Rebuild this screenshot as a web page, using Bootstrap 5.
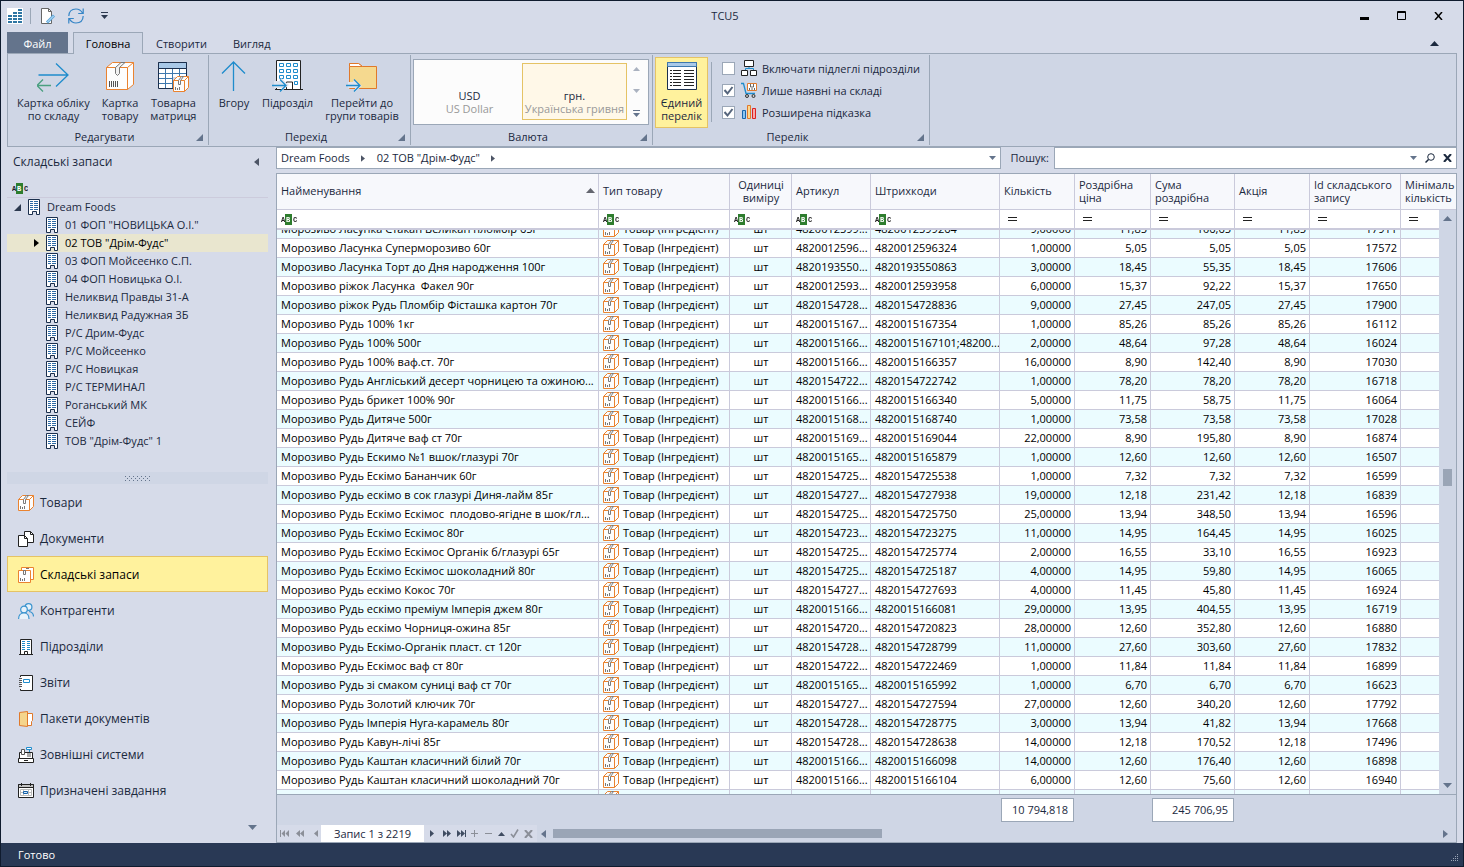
<!DOCTYPE html>
<html lang="uk">
<head>
<meta charset="utf-8">
<meta name="viewport" content="width=device-width, initial-scale=1">
<title>TCU5</title>
<link href="https://cdn.jsdelivr.net/npm/bootstrap@5.3.0/dist/css/bootstrap.min.css" rel="stylesheet">
<style>
:root{--bg:#d6dbe9;--panel:#cfd6e5;--line:#9ba7b7;--grid:#cacadb;--ink:#1b293e;--hot:#fff29d;--hotline:#e5c365;--accent:#64748c}
body{font-family:"Open Sans","Noto Sans",sans-serif;font-size:11px;line-height:13px;color:var(--ink);background:var(--bg)}
button{background:none;border:0;padding:0;color:inherit;font:inherit}
a{color:inherit;text-decoration:none}
svg{display:block;flex:none}
.app{border:1px solid #0f1b2e;background:var(--bg)}
.titlebar{display:grid;grid-template-columns:1fr auto 1fr;height:31px;padding:0 20px 2px 6px}
.vsep{width:1px;height:16px;background:var(--line);margin:0 9px 0 7px}
.winbtns{gap:28px}
.tabs{height:21px;padding-left:6px}
.tabs button{padding:0 13px;height:22px}
.tabs .tab-file{width:61px;background:var(--accent);color:#fff;margin-right:5px;padding:0}
.tabs .tab-on{width:70px;padding:0;border:1px solid var(--line);border-bottom:0;background:var(--panel);color:#000;position:relative;z-index:1}
.ribbon{margin:0 6px;border:1px solid var(--line);background:var(--panel);height:94px}
.rgroup{border-right:1px solid var(--line);margin:1px 0;padding-top:2px}
.g-edit{width:201px}.g-go{width:202px}.g-cur{width:242px}.g-list{width:277px}
.rgroup .tools{height:72px;padding-left:3px}
.rtitle{height:16px;text-align:center;position:relative;line-height:16px;padding-right:7px}
.rtitle::after{content:"";position:absolute;right:5px;bottom:4px;border-left:7px solid transparent;border-bottom:7px solid var(--accent)}
.big{padding:3px 6px 0;text-align:center;display:flex;flex-direction:column;align-items:center;white-space:nowrap}
.big svg{margin-bottom:4px}
.big.on{background:var(--hot);border:1px solid var(--hotline);width:53px;height:71px;padding:2px 0 0;margin-left:-1px}
.gallery{background:#fcfcfc;border:1px solid var(--line);width:236px;height:66px;margin-top:2px;margin-left:-1px;padding:3px}
.gallery .cur{width:105px;display:flex;flex-direction:column;justify-content:flex-end;align-items:center;border:1px solid transparent;height:57px;padding-bottom:4px}
.gallery .cur small{font-size:11px;color:#999;white-space:nowrap}
.gallery .cur.on{border-color:var(--hotline);background:#fff8e8}
.toolsep{width:1px;height:60px;background:var(--line);margin:5px 10px 0 3px}
.checks label{height:22px;gap:5px;white-space:nowrap}
.checks .form-check-input{width:13px;height:13px;margin:0 1px 0 0;border:1px solid var(--line);border-radius:0;background-color:#fff;background-size:11px 11px}
.checks .form-check-input:checked{background-color:#fff;background-image:url("data:image/svg+xml,%3csvg xmlns='http://www.w3.org/2000/svg' viewBox='0 0 11 11'%3e%3cpath fill='none' stroke='%2356657c' stroke-width='2' d='M1.500 5l3 3.500L9.500 2'/%3e%3c/svg%3e")}
.lift{padding-bottom:2px}
.side{width:275px;padding-left:6px}
.side-title{height:30px;font-size:12px;line-height:16px;padding:0 9px 0 6px}
.tree-filter{height:21px;border-bottom:1px solid #cccbdc;padding:2px 0 0 5px}
.tree a{height:18px;padding-left:39px;gap:7px}
.tree a.root{padding-left:7px}
.tree a.on{background:#e9e6cf;color:#000;padding-left:27px}
.grip{height:12px;background:var(--panel)}
.sidenav a{height:36px;padding:2px 0 0 10px;gap:6px;font-size:12px;line-height:16px;border:1px solid transparent}
.sidenav a.on{background:var(--hot);border-color:var(--hotline);color:#000}
.sidemore{height:35px;padding:17px 11px 0 0}
.sidecol{width:261px}
.content{padding-right:6px}
.field{border:1px solid var(--line);background:#fff;height:22px}
.crumbs{flex:0 0 725px;padding:0 4px}
.crumbs a{padding-right:11px}
.searchlbl{width:53px;text-align:right;padding-right:5px}
.searchbox input{border:0;outline:0;height:18px;font:inherit;min-width:0;background:none;padding:0 4px}
.gridbox{border:1px solid var(--line);margin-top:4px;background:var(--panel)}
.viewport{overflow:hidden;position:relative;border-bottom:1px solid var(--line)}
.scroller{overflow:hidden;height:100%}
.stock,.sums{table-layout:fixed;border-collapse:separate;border-spacing:0;width:100%}
.stock thead{position:sticky;top:0}
.stock th,.stock td{padding:0 3px 2px 4px;border-right:1px solid var(--grid);border-bottom:1px solid var(--grid);white-space:nowrap;overflow:hidden;font-weight:400}
.stock th{height:36px;background:#f7f8fc;vertical-align:middle}
.stock .filters td{height:20px;background:#fff;border-bottom-width:2px;padding-bottom:0}
.stock .filters td.eq{padding-left:8px}
.stock tbody td{height:19px;background:#fff;color:#000}
.stock tbody td.kindcell{padding-bottom:0}
.stock tbody tr:nth-child(odd) td{background:#ebfcff}
.stock .num{text-align:right}
.stock tr>:last-child{border-right:0;padding-right:0}
.stock .art{padding-right:0}
.kind{gap:4px}
.c1{width:322px}.c2{width:131px}.c3{width:62px}.c4{width:79px}.c5{width:129px}.c6{width:75px}.c7{width:76px}.c8{width:84px}.c9{width:75px}.c10{width:91px}
.vscroll{position:absolute;top:36px;right:0;bottom:0;width:17px;background:var(--panel);display:grid;grid-template-rows:17px 1fr 17px;justify-items:center;align-items:center}
.vthumb{width:9px;height:17px;background:#9aa5b6;align-self:start;margin-top:242px}
.sums td{height:30px;padding:0 1px}
.sumbox{display:block;height:24px;line-height:22px;border:1px solid var(--line);background:#fff;text-align:right;padding-right:5px}
.pager{height:17px}
.pager .keys{background:var(--bg);height:17px;width:44px;gap:6px;padding-left:3px}
.pager .keys.right{width:113px;gap:5px;padding-left:6px}
.pager .rec{width:103px;background:#fff;height:17px;line-height:17px;text-align:center}
.track{height:9px;margin:0 0 0 7px}
.hthumb{height:9px;width:37%;background:#9aa5b6}
.status{height:23px;background:#293955;color:#fff;padding:0 4px 0 17px}
</style>
</head>
<body>
<svg width="0" height="0" class="position-absolute" aria-hidden="true">
<defs>
<symbol id="i-abc" viewBox="0 0 16 11"><path fill="#2e7d2e" d="M4 0h7v11H4z"/><g font-family="Liberation Mono" font-weight="700" font-size="7"><text x="0" y="8" fill="#222">A</text><text x="5" y="8" fill="#fff">B</text><text x="12" y="8" fill="#222">C</text></g></symbol>
<symbol id="i-eq" viewBox="0 0 9 5"><path stroke="#222" d="M0 .5h9M0 3.500h9"/></symbol>
<symbol id="i-box" viewBox="0 0 16 16"><g fill="none" stroke="#ea8330"><path fill="#fdfdfd" d="M.5 4.500 4.500.5h11v11l-4 4H.5z"/><path d="M.5 4.500h11v11M11.500 4.500l4-4"/></g><path fill="#fff" stroke="#7a7a7a" d="M5.500 4.500 8.500.5h2l-3 4v4h-2z"/><path stroke="#777" d="M2.500 11v3M4.500 12v2M6.500 11v3"/></symbol>
<symbol id="i-stock" viewBox="0 0 16 16"><g fill="#fff" stroke="#ea8330"><path d="M3.500 3V.5h12v12h-3"/><path d="M.5 3.500h12v12H.5z"/></g><path fill="none" stroke="#777" d="M5.500 3.500v4h2v-4zM8 1.500h3M2.500 11v3M4.500 12v2M6.500 11v3"/></symbol>
<symbol id="i-house" viewBox="0 0 12 16"><path fill="#fff" stroke="#1b2f4d" d="M.5.5h11v15h-3v-3h-4v3h-4z"/><path stroke="#2d6aa5" d="M2 2.500h3M6 2.500h4M2 4.500h3M6 4.500h4M2 6.500h3M6 6.500h4M2 8.500h3M6 8.500h4M2 10.500h3M6 10.500h4"/></symbol>
<symbol id="i-docs" viewBox="0 0 16 16"><g fill="#fff" stroke="#222"><path d="M6.500.5h6l3 3v8h-9z"/><path fill="none" d="M12.500.5v3h3"/><path d="M.5 4.500h6l3 3v8h-9z"/><path fill="none" d="M6.500 4.500v3h3"/></g></symbol>
<symbol id="i-people" viewBox="0 0 16 16"><g fill="#e8f2fa" stroke="#3a94cf" stroke-width="1.200"><circle cx="10.500" cy="4" r="3.400"/><path fill="none" d="M11 8.500c3 .5 4.500 2.500 4.500 5"/><circle cx="6" cy="6.500" r="3.300"/><path d="M.6 16c0-4 2-6 5.400-6s5 2 5 6"/></g></symbol>
<symbol id="i-dept" viewBox="0 0 16 16"><path fill="#fff" stroke="#222" d="M2.500 15.500V.5h11v15M1 15.500h14M6.500 15.500v-3h3v3"/><path stroke="#1f8ccc" d="M4 2.500h3M9 2.500h3M4 4.500h3M9 4.500h3M4 6.500h3M9 6.500h3M4 8.500h3M9 8.500h3M4 10.500h3M9 10.500h3"/></symbol>
<symbol id="i-report" viewBox="0 0 16 16"><path fill="#fff" stroke="#222" d="M2.500 2V.5h12v15h-12V14"/><path stroke="#555" d="M1 3.500h3M1 5.500h3M1 7.500h3M1 9.500h3M1 11.500h3"/><path fill="#fff" stroke="#1f8ccc" d="M5.500 4.500h6v3h-6z"/></symbol>
<symbol id="i-pack" viewBox="0 0 16 16"><path fill="#fff" stroke="#e0792b" d="M9.500 2.500h5v7l-1 1v4h-4z"/><path fill="#f5d58c" stroke="#e0792b" d="m1.500 1.500 8-1v15l-8-1z"/></symbol>
<symbol id="i-cash" viewBox="0 0 16 16"><path fill="#fff" stroke="#222" d="M1.500 11V5.500h13V11M.5 11.500h15v4H.5z"/><path stroke="#222" d="M6 13.500h4"/><path fill="#fff" stroke="#555" d="M3.500 2.500h3v5h-3z"/><path fill="#aaa" d="M9 6h4v4H9z"/><path fill="#fff" stroke="#1f8ccc" d="M8.500.5h5v2h-5zM11.500 3v2"/></symbol>
<symbol id="i-cal" viewBox="0 0 16 16"><path fill="#fff" stroke="#222" d="M.5 1.500h15v13H.5z"/><path fill="#c4c4c4" stroke="#222" d="M.5 1.500h15v3H.5z"/><path stroke="#222" d="M3.500 0v3M12.500 0v3"/><path fill="none" stroke="#bbb" d="M2.500 6.500h11v6h-11zM2 9.500h12M5.500 6v7M10.500 6v7"/><path fill="#cfe6f8" stroke="#1560a8" d="M5.500 8.500h4v2h-4z"/></symbol>
<symbol id="t-r" viewBox="0 0 5 8"><path d="M0 0 5 4 0 8z" fill="currentColor"/></symbol>
<symbol id="t-l" viewBox="0 0 5 8"><path d="M5 0 0 4 5 8z" fill="currentColor"/></symbol>
<symbol id="t-u" viewBox="0 0 9 5"><path d="M0 5 4.500 0 9 5z" fill="currentColor"/></symbol>
<symbol id="t-d" viewBox="0 0 9 5"><path d="M0 0h9L4.500 5z" fill="currentColor"/></symbol>
<pattern id="dots" width="4" height="4" patternUnits="userSpaceOnUse"><path fill="#64748c" d="M0 0h1v1H0zM2 2h1v1H2z"/></pattern>
</defs>
</svg>

<div class="app vh-100 d-flex flex-column overflow-hidden">
<header class="titlebar align-items-center flex-shrink-0">
  <div class="d-flex align-items-center">
    <svg width="16" height="16"><path fill="#fff" d="M0 0h16v16H0z"/><path fill="#2e75a3" d="M1 7h4v2H1zM1 10h4v2H1zM1 13h4v2H1zM6 4h4v2H6zM6 7h4v2H6zM6 10h4v2H6zM6 13h4v2H6zM11 1h4v2h-4zM11 4h4v2h-4zM11 7h4v2h-4zM11 10h4v2h-4zM11 13h4v2h-4z"/></svg>
    <span class="vsep"></span>
    <button aria-label="Новий документ"><svg width="16" height="16"><path fill="#fff" stroke="#666" d="M1.500.5h7l3 3v12h-10z"/><path fill="none" stroke="#666" d="M8.500.5v3h3"/><path stroke="#5fa8dc" stroke-width="3" d="m7 14.500 7-7"/><path stroke="#d4ecfa" d="m7.500 14 6-6"/></svg></button>
    <button aria-label="Оновити" class="ms-2 ps-1"><svg width="16" height="16" fill="none" stroke="#3585c6" stroke-width="1.200"><path d="M.8 8C1 3.500 4 1 8 1c3 0 5 1.400 6.500 4M15.200 8C15 12.500 12 15 8 15c-3 0-5-1.400-6.500-4M15.200.5v5h-5M.8 15.500v-5h5"/></svg></button>
    <button aria-label="Налаштувати панель" class="ms-3"><svg width="9" height="7"><path fill="#2c394f" d="M1 0h7v1H1zM1 3h7L4.500 7z"/></svg></button>
  </div>
  <div>TCU5</div>
  <div class="winbtns d-flex align-items-center justify-content-end text-black">
    <button aria-label="Згорнути"><svg width="9" height="9"><path d="M0 6h9v3H0z"/></svg></button>
    <button aria-label="Розгорнути"><svg width="9" height="9"><path fill="none" stroke="#000" d="M.5.5h8v8h-8zM0 1.500h9"/></svg></button>
    <button aria-label="Закрити"><svg width="9" height="8"><path stroke="#000" stroke-width="1.500" d="m1 0 7 8M8 0 1 8"/></svg></button>
  </div>
</header>
<nav class="tabs d-flex flex-shrink-0">
  <button class="tab-file">Файл</button>
  <button class="tab-on">Головна</button>
  <button>Створити</button>
  <button>Вигляд</button>
  <button class="ms-auto me-2 pe-3" aria-label="Згорнути стрічку"><svg width="9" height="5"><use href="#t-u"/></svg></button>
</nav>
<section class="ribbon d-flex flex-shrink-0">
  <div class="rgroup g-edit">
    <div class="tools d-flex align-items-start">
      <button class="big"><svg width="32" height="32" fill="none" stroke-width="1.300"><path stroke="#1f8ccc" d="M1.500 15h29M19 3.500 31 15 19 26.500"/><path stroke="#4ba080" d="M0 25.500h14M6 19.500l-6 6 6 6"/></svg>Картка обліку<br>по складу</button>
      <button class="big"><svg width="32" height="32"><g fill="#fdfdfd" stroke="#ea8330"><path d="m2.500 7.500 6-5h21v22l-6 5h-21z"/><path fill="none" d="M2.500 7.500h21v22M23.500 7.500l6-5"/></g><path fill="#f2f2f2" stroke="#777" d="M11.500 7.500 17 2.500h4l-5.500 5v6l-2 2-2-2z"/><path stroke="#555" d="M5.500 21v6M7.500 21v6M9.500 21v6M11.500 21v6M13.500 21v6"/></svg>Картка<br>товару</button>
      <button class="big"><svg width="32" height="32"><path fill="#fff" stroke="#1b2f4d" d="M1.500 2.500h28v26h-28z"/><path fill="#a9c9e8" stroke="#1b2f4d" d="M1.500 2.500h28v6h-28z"/><path stroke="#3e78ad" d="M2 13.500h27M2 18.500h27M2 23.500h27M8.500 9v19M15.500 9v19M22.500 9v19"/><path fill="#cfd6e5" d="M16 17h16v15H16z"/><use href="#i-box" x="16" y="16" width="16" height="16"/></svg>Товарна<br>матриця</button>
    </div>
    <div class="rtitle">Редагувати</div>
  </div>
  <div class="rgroup g-go">
    <div class="tools d-flex align-items-start">
      <button class="big"><svg width="32" height="32" fill="none" stroke="#1f8ccc" stroke-width="1.300"><path d="M15.500 31V2M4 13.500 15.500 2 27 13.500"/></svg>Вгору</button>
      <button class="big"><svg width="32" height="32"><path fill="#fff" stroke="#222" d="M4.500 29.500V.5h24v29M3 29.500h28M14.500 29v-7h6v7"/><path fill="#fff" stroke="#1f8ccc" d="M7.500 3.500h4v3h-4zM14.500 3.500h4v3h-4zM21.500 3.500h4v3h-4zM7.500 9.500h4v3h-4zM14.500 9.500h4v3h-4zM21.500 9.500h4v3h-4zM7.500 15.500h4v3h-4zM14.500 15.500h4v3h-4zM21.500 15.500h4v3h-4zM22.500 21.500h3v3h-3z"/><path fill="#dfe4ee" d="M2 21h6l1-3 8 7-7 6v-3H2z"/><path fill="none" stroke="#1f8ccc" stroke-width="1.300" d="M0 25.500h14M8 19.500l6 6-6 6"/></svg>Підрозділ</button>
      <button class="big"><svg width="32" height="32"><path fill="#f5d98f" stroke="#e0792b" d="M3.500 5.500V3.500h9l4 3h14v22h-27z"/><path fill="#fff" stroke="#e0792b" d="M3.500 6.500v-3h9l4 3z"/><path fill="#dfe4ee" d="M2 22h5l1-3 8 7-7 6v-4H2z"/><path fill="none" stroke="#1f8ccc" stroke-width="1.300" d="M0 25.500h14M8 19.500l6 6-6 6"/></svg>Перейти до<br>групи товарів</button>
    </div>
    <div class="rtitle">Перехід</div>
  </div>
  <div class="rgroup g-cur">
    <div class="tools d-flex">
      <div class="gallery d-flex flex-shrink-0">
        <button class="cur">USD<small>US Dollar</small></button>
        <button class="cur on">грн.<small>Українська гривня</small></button>
        <div class="d-flex flex-column justify-content-between align-items-center flex-fill py-1">
          <svg width="7" height="4" color="#aab2c0"><use href="#t-u"/></svg>
          <svg width="7" height="4" color="#aab2c0"><use href="#t-d"/></svg>
          <svg width="7" height="7"><path fill="#64748c" d="M0 0h7v1H0zM0 3h7L3.500 7z"/></svg>
        </div>
      </div>
    </div>
    <div class="rtitle">Валюта</div>
  </div>
  <div class="rgroup g-list">
    <div class="tools d-flex">
      <button class="big on"><svg width="32" height="32"><path fill="#fff" stroke="#1b2f4d" d="M1.500 2.500h29v27h-29z"/><path fill="#a9c9e8" stroke="#3e78ad" d="M1.500 2.500h29v4h-29z"/><path stroke="#222" stroke-dasharray="2 1 8 1" d="M4 10.500h11M4 13.500h11M4 16.500h11M4 19.500h11M4 22.500h11M4 25.500h11"/><path stroke="#222" d="M18 10.500h10M18 13.500h10M18 16.500h10M18 19.500h10M18 22.500h10M18 25.500h10"/></svg>Єдиний<br>перелік</button>
      <span class="toolsep"></span>
      <div class="checks">
        <label class="d-flex align-items-center"><input type="checkbox" class="form-check-input"><svg width="16" height="16"><path fill="none" stroke="#1f8ccc" d="M8 6v3M4.500 10V8.500h8V10"/><path fill="#fff" stroke="#222" d="M3.500.5h9v6h-9zM.5 10.500h6v5h-6zM9.500 10.500h6v5h-6z"/></svg>Включати підлеглі підрозділи</label>
        <label class="d-flex align-items-center"><input type="checkbox" class="form-check-input" checked><svg width="16" height="16"><path fill="none" stroke="#1f8ccc" stroke-width="1.300" d="M0 1.500h2.500L5 11.500h9"/><path fill="#fff" stroke="#e0792b" d="M6.500 1.500h9v7h-9z"/><path fill="none" stroke="#666" d="M9.500 2v3h3V2M8.500 6v2M11 6v2M13.500 6v2"/><circle cx="6" cy="14" r="1.500" fill="#ccc" stroke="#333"/><circle cx="12.500" cy="14" r="1.500" fill="#ccc" stroke="#333"/></svg>Лише наявні на складі</label>
        <label class="d-flex align-items-center"><input type="checkbox" class="form-check-input" checked><svg width="16" height="16"><path fill="#8cc4ee" stroke="#1765ad" d="M1.500 6.500h3v8h-3z"/><path fill="#fbd78d" stroke="#e0792b" d="M6.500 1.500h3v13h-3z"/><path fill="#f6a9a9" stroke="#d22" d="M11.500 4.500h3v10h-3z"/></svg>Розширена підказка</label>
      </div>
    </div>
    <div class="rtitle">Перелік</div>
  </div>
</section>

<main class="d-flex flex-fill overflow-hidden">
  <aside class="side d-flex flex-column flex-shrink-0">
    <div class="side-title sidecol d-flex align-items-center justify-content-between">Складські запаси<button aria-label="Згорнути панель"><svg width="5" height="8" color="#4d5566"><use href="#t-l"/></svg></button></div>
    <div class="tree-filter sidecol"><svg width="16" height="11" class="mt-1"><use href="#i-abc"/></svg></div>
    <nav class="tree sidecol d-flex flex-column" id="tree">
      <a href="#" class="root d-flex align-items-center"><svg width="7" height="7"><path fill="#2c394f" d="M7 0v7H0z"/></svg><svg width="12" height="16"><use href="#i-house"/></svg><span class="lift">Dream Foods</span></a>
    </nav>
    <div class="grip sidecol mt-auto d-flex align-items-center justify-content-center"><svg width="26" height="5"><path d="M0 0h26v5H0z" fill="url(#dots)"/></svg></div>
    <nav class="sidenav sidecol d-flex flex-column" id="sidenav"></nav>
    <div class="sidemore sidecol d-flex justify-content-end align-items-start"><button aria-label="Ще розділи"><svg width="9" height="5" color="#64748c"><use href="#t-d"/></svg></button></div>
  </aside>
  <section class="content d-flex flex-column flex-fill overflow-hidden">
    <div class="d-flex align-items-center flex-shrink-0">
      <div class="field crumbs d-flex align-items-center">
        <a href="#" class="lift">Dream Foods</a><svg width="4" height="7" class="me-2" color="#4d5566"><use href="#t-r"/></svg>
        <a href="#" class="ps-1 lift">02 ТОВ "Дрім-Фудс"</a><svg width="4" height="7" color="#4d5566"><use href="#t-r"/></svg>
        <button class="ms-auto" aria-label="Історія"><svg width="7" height="4" color="#64748c"><use href="#t-d"/></svg></button>
      </div>
      <label class="searchlbl lift" for="q">Пошук:</label>
      <div class="field searchbox d-flex align-items-center flex-fill pe-1">
        <input id="q" type="text" class="flex-fill">
        <button aria-label="Варіанти пошуку"><svg width="7" height="4" color="#64748c"><use href="#t-d"/></svg></button>
        <button class="ms-2" aria-label="Шукати"><svg width="10" height="10" fill="none" stroke="#1b293e"><circle cx="6" cy="4" r="3.300"/><path stroke-width="1.500" d="M3.500 6.500.5 9.500"/></svg></button>
        <button class="ms-2" aria-label="Очистити"><svg width="9" height="8"><path stroke="#1b293e" stroke-width="2" d="m1 0 7 8M8 0 1 8"/></svg></button>
      </div>
    </div>
    <div class="gridbox d-flex flex-column flex-fill overflow-hidden">
      <div class="viewport flex-fill">
        <div class="scroller" id="scroller">
        <table class="stock">
          <colgroup><col class="c1"><col class="c2"><col class="c3"><col class="c4"><col class="c5"><col class="c6"><col class="c7"><col class="c8"><col class="c9"><col class="c10"><col></colgroup>
          <thead>
            <tr><th><div class="d-flex align-items-center justify-content-between">Найменування<svg width="9" height="5" color="#64666f"><use href="#t-u"/></svg></div></th><th>Тип товару</th><th class="text-center">Одиниці<br>виміру</th><th>Артикул</th><th>Штрихкоди</th><th>Кількість</th><th>Роздрібна<br>ціна</th><th>Сума<br>роздрібна</th><th>Акція</th><th>Id складського<br>запису</th><th>Мінімаль<br>кількість</th></tr>
            <tr class="filters" id="filters"></tr>
          </thead>
          <tbody id="rows"></tbody>
        </table>
        </div>
        <div class="vscroll" aria-hidden="true"><svg width="9" height="5" color="#64748c"><use href="#t-u"/></svg><span class="vthumb"></span><svg width="9" height="5" color="#64748c"><use href="#t-d"/></svg></div>
      </div>
      <table class="sums">
        <colgroup><col class="c1"><col class="c2"><col class="c3"><col class="c4"><col class="c5"><col class="c6"><col class="c7"><col class="c8"><col class="c9"><col class="c10"><col></colgroup>
        <tbody><tr><td></td><td></td><td></td><td></td><td></td><td><span class="sumbox">10 794,818</span></td><td></td><td><span class="sumbox">245 706,95</span></td><td></td><td></td><td></td></tr></tbody>
      </table>
      <div class="pager d-flex align-items-center">
        <div class="keys d-flex align-items-center">
          <button aria-label="Перший"><svg width="10" height="7" fill="#8b8f98"><path d="M0 0h1v7H0zM5 0v7L1.500 3.500zM9 0v7L5.500 3.500z"/></svg></button>
          <button aria-label="Попередня сторінка"><svg width="8" height="7" fill="#8b8f98"><path d="M4 0v7L0 3.500zM8 0v7L4 3.500z"/></svg></button>
          <button aria-label="Попередній"><svg width="4" height="7" class="ms-1" fill="#8b8f98"><path d="M4 0v7L0 3.500z"/></svg></button>
        </div>
        <span class="rec">Запис 1 з 2219</span>
        <div class="keys right d-flex align-items-center">
          <button aria-label="Наступний"><svg width="8" height="7" fill="#3f4c61"><path d="M0 0v7l4-3.500z"/></svg></button>
          <button aria-label="Наступна сторінка"><svg width="9" height="7" fill="#3f4c61"><path d="M0 0v7l4-3.500zM4 0v7l4-3.500z"/></svg></button>
          <button aria-label="Останній"><svg width="9" height="7" fill="#3f4c61"><path d="M0 0v7l4-3.500zM4 0v7l4-3.500zM8 0h1v7H8z"/></svg></button>
          <button aria-label="Додати"><svg width="8" height="8"><path stroke="#8b8f98" d="M0 3.500h7M3.500 0v7"/></svg></button>
          <button aria-label="Видалити"><svg width="9" height="8"><path stroke="#8b8f98" d="M1 3.500h7"/></svg></button>
          <button aria-label="Змінити"><svg width="7" height="4" color="#3f4c61"><use href="#t-u"/></svg></button>
          <button aria-label="Зберегти"><svg width="9" height="9"><path fill="none" stroke="#8b8f98" stroke-width="1.600" d="m1 5 2.500 3L8 .5"/></svg></button>
          <button aria-label="Скасувати"><svg width="9" height="8"><path stroke="#8b8f98" stroke-width="2" d="m1 0 7 8M8 0 1 8"/></svg></button>
        </div>
        <svg width="5" height="8" class="ms-1" color="#64748c"><use href="#t-l"/></svg>
        <div class="track flex-fill"><div class="hthumb"></div></div>
        <svg width="5" height="8" class="me-2" color="#64748c"><use href="#t-r"/></svg>
      </div>
    </div>
  </section>
</main>
<footer class="status d-flex align-items-center justify-content-between flex-shrink-0">Готово<svg width="8" height="8" class="align-self-end mb-1" fill="#9aa5b6"><path d="M6 0h1v1H6zM4 2h1v1H4zM6 2h1v1H6zM2 4h1v1H2zM4 4h1v1H4zM6 4h1v1H6zM0 6h1v1H0zM2 6h1v1H2zM4 6h1v1H4zM6 6h1v1H6z"/></svg></footer>
</div>

<script src="https://cdn.jsdelivr.net/npm/bootstrap@5.3.0/dist/js/bootstrap.bundle.min.js"></script>
<script>
const icon = (id, w, h) => `<svg width="${w}" height="${h}"><use href="#${id}"/></svg>`;

const units = ['01 ФОП "НОВИЦЬКА О.І."','02 ТОВ "Дрім-Фудс"','03 ФОП Мойсеєнко С.П.','04 ФОП Новицька О.І.','Неликвид Правды 31-А','Неликвид Радужная 3Б','Р/С Дрим-Фудс','Р/С Мойсеенко','Р/С Новицкая','Р/С ТЕРМИНАЛ','Роганський МК','СЕЙФ','ТОВ "Дрім-Фудс" 1'];
document.getElementById('tree').insertAdjacentHTML('beforeend', units.map((u, i) =>
  `<a href="#" class="d-flex align-items-center${i === 1 ? ' on' : ''}">${i === 1 ? icon('t-r', 5, 8) : ''}${icon('i-house', 12, 16)}<span class="lift">${u}</span></a>`).join(''));

const sections = [['i-box','Товари'],['i-docs','Документи'],['i-stock','Складські запаси'],['i-people','Контрагенти'],['i-dept','Підрозділи'],['i-report','Звіти'],['i-pack','Пакети документів'],['i-cash','Зовнішні системи'],['i-cal','Призначені завдання']];
document.getElementById('sidenav').innerHTML = sections.map(([ic, t], i) =>
  `<a href="#" class="d-flex align-items-center${i === 2 ? ' on' : ''}">${icon(ic, 16, 16)}${t}</a>`).join('');

document.getElementById('filters').innerHTML =
  `<td>${icon('i-abc', 16, 11)}</td>`.repeat(5) + `<td class="eq">${icon('i-eq', 9, 5)}</td>`.repeat(6);

/* name | article | barcodes | quantity | price | sum | record id */
const data = `Морозиво Ласунка Стакан Великан пломбір 65г|4820012599...|4820012599264|9,00000|11,85|106,65|17911
Морозиво Ласунка Суперморозиво 60г|4820012596...|4820012596324|1,00000|5,05|5,05|17572
Морозиво Ласунка Торт до Дня народження 100г|4820193550...|4820193550863|3,00000|18,45|55,35|17606
Морозиво ріжок Ласунка&nbsp; Факел 90г|4820012593...|4820012593958|6,00000|15,37|92,22|17650
Морозиво ріжок Рудь Пломбір Фісташка картон 70г|4820154728...|4820154728836|9,00000|27,45|247,05|17900
Морозиво Рудь 100% 1кг|4820015167...|4820015167354|1,00000|85,26|85,26|16112
Морозиво Рудь 100% 500г|4820015166...|4820015167101;48200...|2,00000|48,64|97,28|16024
Морозиво Рудь 100% ваф.ст. 70г|4820015166...|4820015166357|16,00000|8,90|142,40|17030
Морозиво Рудь Англіський десерт чорницею та ожиною...|4820154722...|4820154722742|1,00000|78,20|78,20|16718
Морозиво Рудь брикет 100% 90г|4820015166...|4820015166340|5,00000|11,75|58,75|16064
Морозиво Рудь Дитяче 500г|4820015168...|4820015168740|1,00000|73,58|73,58|17028
Морозиво Рудь Дитяче ваф ст 70г|4820015169...|4820015169044|22,00000|8,90|195,80|16874
Морозиво Рудь Ескимо №1 вшок/глазурі 70г|4820015165...|4820015165879|1,00000|12,60|12,60|16507
Морозиво Рудь Ескімо Бананчик 60г|4820154725...|4820154725538|1,00000|7,32|7,32|16599
Морозиво Рудь ескімо в сок глазурі Диня-лайм 85г|4820154727...|4820154727938|19,00000|12,18|231,42|16839
Морозиво Рудь Ескімо Ескімос&nbsp; плодово-ягідне в шок/гл...|4820154725...|4820154725750|25,00000|13,94|348,50|16596
Морозиво Рудь Ескімо Ескімос 80г|4820154723...|4820154723275|11,00000|14,95|164,45|16025
Морозиво Рудь Ескімо Ескімос Органік б/глазурі 65г|4820154725...|4820154725774|2,00000|16,55|33,10|16923
Морозиво Рудь Ескімо Ескімос шоколадний 80г|4820154725...|4820154725187|4,00000|14,95|59,80|16065
Морозиво Рудь ескімо Кокос 70г|4820154727...|4820154727693|4,00000|11,45|45,80|16924
Морозиво Рудь ескімо преміум Імперія джем 80г|4820015166...|4820015166081|29,00000|13,95|404,55|16719
Морозиво Рудь ескімо Чорниця-ожина 85г|4820154720...|4820154720823|28,00000|12,60|352,80|16880
Морозиво Рудь Ескімо-Органік пласт. ст 120г|4820154728...|4820154728799|11,00000|27,60|303,60|17832
Морозиво Рудь Ескімос ваф ст 80г|4820154722...|4820154722469|1,00000|11,84|11,84|16899
Морозиво Рудь зі смаком суниці ваф ст 70г|4820015165...|4820015165992|1,00000|6,70|6,70|16623
Морозиво Рудь Золотий ключик 70г|4820154727...|4820154727594|27,00000|12,60|340,20|17792
Морозиво Рудь Імперія Нуга-карамель 80г|4820154728...|4820154728775|3,00000|13,94|41,82|17668
Морозиво Рудь Кавун-лічі 85г|4820154728...|4820154728638|14,00000|12,18|170,52|17496
Морозиво Рудь Каштан класичний білий 70г|4820015166...|4820015166098|14,00000|12,60|176,40|16898
Морозиво Рудь Каштан класичний шоколадний 70г|4820015166...|4820015166104|6,00000|12,60|75,60|16940
||||||`;
document.getElementById('rows').innerHTML = data.split('\n').map(line => {
  const [n, art, bar, q, p, s, id] = line.split('|');
  return `<tr><td>${n}</td><td class="kindcell"><div class="kind d-flex align-items-center">${icon('i-box', 16, 16)}<span class="lift">${n ? 'Товар (Інгредієнт)' : ''}</span></div></td><td class="text-center">${n ? 'шт' : ''}</td><td class="art">${art}</td><td>${bar}</td><td class="num">${q}</td><td class="num">${p}</td><td class="num">${s}</td><td class="num">${p}</td><td class="num">${id}</td><td></td></tr>`;
}).join('');
document.getElementById('scroller').scrollTop = 10;
</script>
</body>
</html>
